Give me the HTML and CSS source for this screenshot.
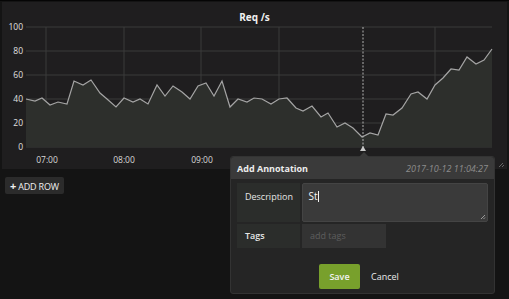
FILE: index.html
```html
<html>
<head>
    <meta charset="UTF-8">
    <title>Dashboard</title>
    <link rel="stylesheet" href="styles.css">
</head>
<body>
    <div class="panel">
        <div class="panel-title">Req /s</div>
        <svg class="graph" width="505" height="146" viewBox="2 22 505 146">
            <g class="grid">
                <line x1="26" y1="27" x2="492" y2="27"/>
                <line x1="26" y1="51" x2="492" y2="51"/>
                <line x1="26" y1="75" x2="492" y2="75"/>
                <line x1="26" y1="99" x2="492" y2="99"/>
                <line x1="26" y1="123" x2="492" y2="123"/>
                <line x1="26" y1="147" x2="492" y2="147"/>
                <line x1="46" y1="27" x2="46" y2="147"/>
                <line x1="124" y1="27" x2="124" y2="147"/>
                <line x1="201" y1="27" x2="201" y2="147"/>
                <line x1="279" y1="27" x2="279" y2="147"/>
                <line x1="435" y1="27" x2="435" y2="147"/>
            </g>
            <path class="area" id="area" d=""/>
            <polyline class="series" id="series" points=""/>
            <line class="marker-line" x1="363" y1="27" x2="363" y2="149"/>
            <polygon class="marker" points="363,146 366,151 360,151"/>
            <g class="y-labels">
                <text x="23" y="30">100</text>
                <text x="23" y="54">80</text>
                <text x="23" y="78">60</text>
                <text x="23" y="102">40</text>
                <text x="23" y="126">20</text>
                <text x="23" y="150">0</text>
            </g>
            <g class="x-labels">
                <text x="47" y="163">07:00</text>
                <text x="124" y="163">08:00</text>
                <text x="202" y="163">09:00</text>
            </g>
            <path class="resize" d="M503 163 L499 167 M504 165 L502 167"/>
        </svg>
    </div>

    <div class="rows">
        <button class="add-row"><b>+</b> ADD ROW</button>
    </div>

    <div class="annotation">
        <div class="annotation-header">
            <span class="annotation-title">Add Annotation</span>
            <span class="annotation-time">2017-10-12 11:04:27</span>
        </div>
        <div class="annotation-body">
            <div class="field">
                <label class="field-label tall">Description</label>
                <div class="field-textarea">St<span class="caret"></span>
                    <svg class="grip" width="6" height="6" viewBox="0 0 6 6"><path d="M5 1 L1 5 M5 3.5 L3.5 5"/></svg>
                </div>
            </div>
            <div class="field">
                <label class="field-label">Tags</label>
                <div class="field-input">add tags</div>
            </div>
            <div class="actions">
                <button class="btn-save">Save</button>
                <a class="btn-cancel">Cancel</a>
            </div>
        </div>
    </div>

<script>
    let points = [
        [26,99],[35,101],[42,98],[50,105],[58,102],[67,104],[74,81],[83,85],[91,80],
        [100,93],[107,99],[116,107],[124,98],[133,102],[140,99],[148,104],[157,85],
        [165,96],[173,86],[182,92],[190,99],[198,86],[206,83],[214,96],[222,81],
        [230,107],[238,99],[247,102],[254,98],[262,99],[271,104],[279,99],[287,98],
        [296,108],[303,111],[312,106],[321,117],[328,113],[337,127],[345,123],
        [353,128],[362,137],[370,133],[378,135],[386,114],[393,115],[402,108],
        [411,94],[418,92],[427,99],[435,85],[443,78],[451,69],[459,70],[467,57],
        [476,64],[484,60],[492,49]
    ];
    let line = points.map(p => p[0] + "," + p[1]).join(" ");
    document.getElementById("series").setAttribute("points", line);
    document.getElementById("area").setAttribute("d", "M26,147 L" + line.split(" ").join(" L") + " L492,147 Z");
</script>
</body>
</html>
```

FILE: styles.css
```css
body {
    background-color: #141414;
    margin: 0;
    font-family: "Open Sans", "Liberation Sans", sans-serif;
    border-top: 1px solid #050505;
}

.panel {
    margin: 1px 2px 0 2px;
    height: 167px;
    background-color: #1f1e1f;
    display: flex;
    flex-direction: column;
}

.panel-title {
    height: 20px;
    line-height: 30px;
    text-align: center;
    color: #f0f0f0;
    font-size: 10px;
    font-weight: bold;
}

.graph {
    display: block;
}

.grid line {
    stroke: #3a3a3a;
    stroke-width: 1;
}

.area {
    fill: #2d2f2c;
}

.series {
    fill: none;
    stroke: #a4a4a4;
    stroke-width: 1.2;
}

.marker-line {
    stroke: #b0b0b0;
    stroke-dasharray: 2 1.5;
}

.marker {
    fill: #c8c8c8;
}

.y-labels text {
    fill: #e0e0e0;
    font-size: 8.5px;
    text-anchor: end;
}

.x-labels text {
    fill: #d8d8d8;
    font-size: 8.5px;
    text-anchor: middle;
}

.resize {
    stroke: #666;
    stroke-width: 1;
}

.rows {
    padding: 8px 5px;
}

.add-row {
    background-color: #2b2b2b;
    color: #f0f0f0;
    border: none;
    border-radius: 2px;
    height: 17px;
    padding: 0 5px;
    font-family: "Open Sans", "Liberation Sans", sans-serif;
    font-size: 9px;
    letter-spacing: -0.2px;
}

.add-row b {
    font-size: 11px;
}

.annotation {
    position: absolute;
    left: 230px;
    top: 156px;
    width: 263px;
    height: 136px;
    border: 1px solid #333;
    border-radius: 3px;
    background-color: #252525;
    display: flex;
    flex-direction: column;
}

.annotation::before {
    content: "";
    position: absolute;
    left: 128px;
    top: -5px;
    border-left: 5px solid transparent;
    border-right: 5px solid transparent;
    border-bottom: 5px solid #3a3a3a;
}

.annotation-header {
    height: 22px;
    background-color: #3a3a3a;
    border-radius: 3px 3px 0 0;
    display: flex;
    justify-content: space-between;
    align-items: center;
    padding: 0 6px;
}

.annotation-title {
    color: #ececec;
    font-size: 9px;
    font-weight: bold;
}

.annotation-time {
    color: #8c8c8c;
    font-size: 9px;
    font-style: italic;
}

.annotation-body {
    padding: 4px 6px 0 6px;
    display: flex;
    flex-direction: column;
    gap: 2px;
}

.field {
    display: flex;
    gap: 2px;
}

.field-label {
    width: 55px;
    height: 24px;
    line-height: 24px;
    padding-left: 8px;
    background-color: #2b2d2b;
    color: #e6e6e6;
    font-size: 9px;
    font-weight: 600;
}

.field-label.tall {
    height: 39px;
    line-height: 27px;
    font-weight: normal;
}

.field-textarea {
    position: relative;
    width: 176px;
    height: 29px;
    padding: 4px 4px 4px 6px;
    background-color: #3a3a3a;
    border: 1px solid #444;
    border-radius: 2px;
    color: #f5f5f5;
    font-size: 10px;
    line-height: 17px;
}

.caret {
    display: inline-block;
    width: 1px;
    height: 11px;
    background-color: #f5f5f5;
    vertical-align: -2px;
}

.grip {
    position: absolute;
    right: 1px;
    bottom: 1px;
}

.grip path {
    stroke: #999;
    stroke-width: 1;
}

.field-input {
    width: 76px;
    height: 24px;
    line-height: 24px;
    padding-left: 8px;
    background-color: #333;
    color: #5e5e5e;
    font-size: 9px;
}

.actions {
    display: flex;
    align-items: center;
    gap: 11px;
    padding: 14px 0 0 82px;
}

.btn-save {
    width: 41px;
    height: 25px;
    background-color: #78a02c;
    border: none;
    border-radius: 2px;
    color: #f2f2f2;
    font-family: "Open Sans", "Liberation Sans", sans-serif;
    font-size: 9px;
    font-weight: 600;
}

.btn-cancel {
    color: #eaeaea;
    font-size: 9px;
}
```
